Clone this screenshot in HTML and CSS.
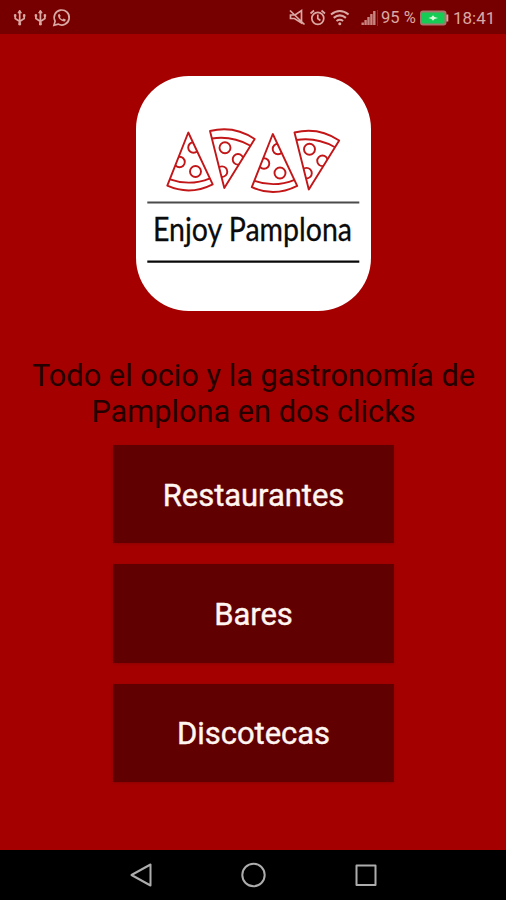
FILE: index.html
```html
<!DOCTYPE html>
<html lang="es">
<head>
<meta charset="utf-8">
<title>Enjoy Pamplona</title>
<link rel="stylesheet" href="styles.css">
</head>
<body>
<header class="status">
  <svg class="status-left" width="60" height="20" viewBox="12 8 60 20" fill="none" stroke="#dba9a4" stroke-width="1.7">
    <g id="usb"><path d="M19.700 11V25M15.200 15v3.500l4.500 3 4.500-3V15"/><path d="M17.900 13l1.800-3 1.800 3zM18.800 22.500h1.800v2.500h-1.800zM14.400 14.500h1.600v2h-1.600zM23.400 14.500h1.600v2h-1.600z" fill="#dba9a4" stroke-width=".8"/></g>
    <use href="#usb" x="20.700"/>
    <path d="M54 25.300l1.100-4.200a7.500 7.500 0 1 1 3 3z"/>
    <path d="M59.300 13.700l-1.200 1c-.7 3 3.300 7 6.700 6.700l1.200-1.600-2.300-1.400-1.300 1c-1.300-.5-2-1.400-2.500-2.500l.9-1z" fill="#dba9a4" stroke="none"/>
  </svg>
  <div class="status-right">
    <svg width="92" height="20" viewBox="288 8 92 20" fill="none" stroke="#dba9a4" stroke-width="1.700">
      <path d="M290.500 15h4.500l6.500-4.500v12.500l-7-4.500h-4zM290 10.500l14.500 14"/>
      <circle cx="317.800" cy="18.300" r="6"/><path d="M317.800 14.500v4l2.600 2M310.500 13.500l3.500-3M325 13.500l-3.500-3"/>
      <path d="M331 14.500q8.800-7 17.600 0M333.700 17.800q6.100-4.800 12.200 0M336.500 21q3.300-2.500 6.600 0" stroke-width="2.100"/><circle cx="339.800" cy="23.800" r="1.500" fill="#dba9a4" stroke="none"/>
      <path d="M362.700 25v-2.500M365.600 25v-5M368.500 25v-8M371.400 25v-11M374.300 25V11" stroke="#c98580" stroke-width="2.400"/>
      <path d="M377.500 10v16" stroke="#8e2a27" stroke-width="1"/>
    </svg>
    <span class="percent">95 %</span>
    <svg class="battery" width="29" height="16" viewBox="0 0 29 16"><rect x="1" y="1.500" width="24.500" height="13" rx="2" fill="#17cc55" stroke="#a9756c" stroke-width="2"/><path d="M27.300 4.500v7" stroke="#dba9a4" stroke-width="2"/><path d="M8.500 8l3-1 1.500-1.800 1.500 1.800 3.500 1-3.500 1-1.500 1.800-1.500-1.800z" fill="#d8ffd9"/></svg>
    <span class="clock">18:41</span>
  </div>
</header>
<main>
  <svg class="logo" width="235" height="235" viewBox="0 0 235 235">
    <defs>
      <clipPath id="up"><path d="M52.300 55.700L31.300 109.700H76.700z"/></clipPath>
      <clipPath id="down"><path d="M74 55L118.700 63 88.300 112z"/></clipPath>
      <g id="pair" fill="none" stroke="#c21618" stroke-width="1.900" stroke-linejoin="round">
        <path d="M52.300 56.500L31.300 109.700Q54 119.800 76.700 108.300zM34 103.300Q54 110.500 74 102.300"/>
        <circle cx="59.500" cy="95.500" r="5.500"/>
        <g clip-path="url(#up)"><circle cx="43.500" cy="86" r="5.300"/><circle cx="57.500" cy="71.500" r="5.300"/></g>
        <path d="M74 55Q98 49 118.700 63L88.300 112zM76 62.500Q96 59.500 114 69.500"/>
        <circle cx="89" cy="71.700" r="5.500"/>
        <g clip-path="url(#down)"><circle cx="102" cy="83.300" r="5.300"/><circle cx="86" cy="95.700" r="5.300"/></g>
      </g>
    </defs>
    <rect width="235" height="235" rx="53" fill="#fff"/>
    <use href="#pair"/><use href="#pair" x="84.500" y="1.500"/>
    <path d="M11.300 126.500h212" stroke="#4b4b4b" stroke-width="2.200"/>
    <path d="M11.300 185.700h212" stroke="#080808" stroke-width="2.200"/>
    <text class="brand" x="17" y="165" textLength="199" lengthAdjust="spacingAndGlyphs">Enjoy Pamplona</text>
  </svg>
  <p class="tagline">Todo el ocio y la gastronomía de<br>Pamplona en dos clicks</p>
  <div class="menu">
    <button class="choice">Restaurantes</button>
    <button class="choice">Bares</button>
    <button class="choice">Discotecas</button>
  </div>
</main>
<nav class="navbar">
  <svg width="506" height="50" viewBox="0 0 506 50" fill="none" stroke="#adadad" stroke-width="2" stroke-linejoin="round"><path d="M131.500 25L150.500 14.500V35.500z"/><circle cx="253.500" cy="25" r="11.200"/><rect x="356.500" y="15.500" width="19" height="19.500"/></svg>
</nav>
</body>
</html>
```
FILE: styles.css
```css
* { box-sizing: border-box; }
body {
  margin: 0;
  height: 900px;
  display: flex;
  flex-direction: column;
  background: #a40000;
  font-family: Roboto, "Liberation Sans", sans-serif;
  overflow: hidden;
}
.status {
  height: 34px;
  padding: 0 11px 0 12px;
  display: flex;
  align-items: center;
  justify-content: space-between;
  background: #760000;
  color: #dba9a4;
  font-size: 17px;
}
.status-right { display: flex; align-items: center; }
.status svg { display: block; margin-top: 2px; }
.percent { width: 35px; margin-left: 1px; font-size: 16.5px; white-space: nowrap; }
.status .battery { margin: 1px 4px 0 4px; }
.clock { width: 42px; margin-top: 2px; }
main {
  flex: 1;
  display: flex;
  flex-direction: column;
  align-items: center;
  padding-top: 42px;
}
.logo { display: block; overflow: visible; }
.brand {
  font-family: Lato, "Open Sans", sans-serif;
  font-size: 32px;
  fill: #0b0b0b;
  stroke: #0b0b0b;
  stroke-width: 0.3px;
}
.tagline {
  margin: 47px 0 0 1px;
  font-size: 30.7px;
  line-height: 36px;
  letter-spacing: 0.02px;
  text-align: center;
  white-space: nowrap;
  color: #240000;
}
.menu {
  margin-top: 15px;
  display: grid;
  gap: 21.2px;
}
.choice {
  width: 281px;
  height: 98.2px;
  padding: 2px 0 0 1px;
  border: 0;
  background: #600000;
  box-shadow: 0 1px 2px #80000099;
  color: #fff6f1;
  font: 400 31px Roboto, sans-serif;
  letter-spacing: -0.05px;
  -webkit-text-stroke: 0.4px #fff6f1;
}
.navbar { height: 50px; background: #000; }
.navbar svg { display: block; }
```
